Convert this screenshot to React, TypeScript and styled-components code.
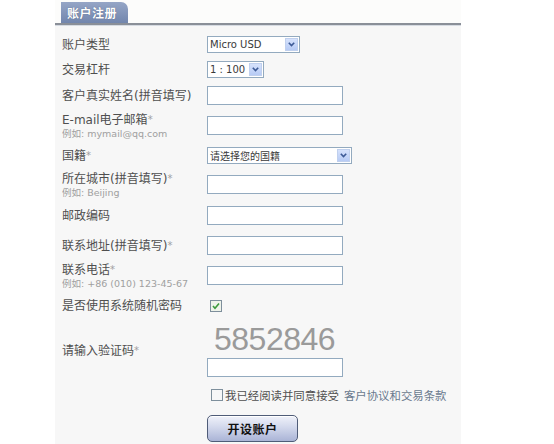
import React from "react";
import styled, { createGlobalStyle } from "styled-components";

const GlobalStyle = createGlobalStyle`
  html, body { margin: 0; padding: 0; background: #ffffff; }
  body {
    font-family: "DejaVu Sans", "Noto Sans CJK SC", sans-serif;
    color: #4a4a4a;
  }
`;

const Panel = styled.div`
  margin-left: 55px;
  width: 406px;
  height: 444px;
  background: #f7f7f7;
  overflow: hidden;
`;

const Header = styled.div`
  height: 25px;
  box-sizing: border-box;
  display: flex;
  align-items: flex-end;
  padding-left: 6px;
  background: #fcfcfb;
  border-bottom: 2px solid #8a8f98;
  box-shadow: 0 1px 0 #d6dbe2;
`;

const Tab = styled.div`
  height: 21px;
  width: 67px;
  box-sizing: border-box;
  display: flex;
  align-items: center;
  padding-left: 6px;
  background: linear-gradient(#95a5c6, #7286ad);
  border-top-right-radius: 7px;
  color: #ffffff;
  font-family: "Noto Sans CJK SC", sans-serif;
  font-weight: 700;
  font-size: 12px;
  letter-spacing: 0.5px;
  text-shadow: 0 0 1px #4a5a7a;
`;

const Form = styled.div`
  padding: 7px 0 0 7px;
  display: flex;
  flex-direction: column;
`;

const Row = styled.div<{ $h: number }>`
  display: grid;
  grid-template-columns: 145px auto;
  align-items: center;
  height: ${(p) => p.$h}px;
`;

const LabelBlock = styled.div`
  display: flex;
  flex-direction: column;
  gap: 1px;
`;

const Label = styled.span`
  font-size: 12px;
  line-height: 14px;
  color: #4f4f4f;
  white-space: nowrap;
`;

const Star = styled.span`
  color: #a0a0a0;
  font-size: 10px;
  vertical-align: top;
`;

const Hint = styled.span`
  font-size: 9.5px;
  line-height: 11px;
  color: #a0a0a0;
  white-space: nowrap;
`;

const TextInput = styled.div<{ $w?: number }>`
  width: ${(p) => p.$w ?? 136}px;
  height: 19px;
  box-sizing: border-box;
  border: 1px solid #93aabf;
  background: #ffffff;
`;

const SelectBox = styled.div<{ $w: number }>`
  width: ${(p) => p.$w}px;
  height: 17px;
  box-sizing: border-box;
  border: 1px solid #93aabf;
  background: #ffffff;
  display: flex;
  align-items: center;
  justify-content: space-between;
  padding-left: 2px;
`;

const SelectText = styled.span`
  font-size: 10px;
  color: #3a3a3a;
  white-space: nowrap;
`;

const ArrowBtn = styled.span`
  width: 13px;
  height: 13px;
  margin-right: 1px;
  box-sizing: border-box;
  background: linear-gradient(#d6e2fc, #b7cbf5);
  border: 1px solid #c0d0ee;
  display: flex;
  align-items: center;
  justify-content: center;
`;

const Check = styled.span`
  display: inline-flex;
  margin-left: 3px;
`;

const CaptchaCell = styled.div`
  display: flex;
  flex-direction: column;
  gap: 5px;
`;

const Captcha = styled.div`
  font-family: "Liberation Sans", sans-serif;
  font-size: 32px;
  line-height: 28px;
  height: 28px;
  letter-spacing: -0.5px;
  color: #9a9a9a;
  padding-left: 7px;
`;

const Agree = styled.div`
  display: flex;
  align-items: center;
  gap: 2px;
  margin-left: 4px;
  font-size: 11.4px;
  color: #4f4f4f;
  white-space: nowrap;
`;

const AgreeLink = styled.span`
  color: #6a7a8e;
  margin-left: 3px;
`;

const Button = styled.div`
  width: 91px;
  height: 27px;
  box-sizing: border-box;
  border: 1px solid #4f5c78;
  border-radius: 5px;
  background: linear-gradient(#f0f2fa 0%, #d2d8ec 45%, #aab4d6 100%);
  display: flex;
  align-items: center;
  justify-content: center;
  font-family: "Noto Sans CJK SC", sans-serif;
  font-weight: 700;
  font-size: 12px;
  color: #111;
  letter-spacing: 0.5px;
  box-shadow: inset 0 1px 0 #ffffff;
`;

const Arrow = () => (
  <ArrowBtn>
    <svg width="7" height="5" viewBox="0 0 7 5">
      <path d="M0.8 0.8 L3.5 3.6 L6.2 0.8" stroke="#3d5a96" strokeWidth="1.6" fill="none" />
    </svg>
  </ArrowBtn>
);

const Select = ({ w, text }: { w: number; text: string }) => (
  <SelectBox $w={w}>
    <SelectText>{text}</SelectText>
    <Arrow />
  </SelectBox>
);

const CheckBox = ({ checked }: { checked?: boolean }) => (
  <svg width="12" height="12" viewBox="0 0 12 12">
    <rect x="0.5" y="0.5" width="11" height="11" fill={checked ? "#eef3ea" : "#f6f7f8"} stroke="#7e8f9c" />
    {checked && <path d="M3 6 L5 8.2 L9 3.6" stroke="#3c9a3c" strokeWidth="1.6" fill="none" />}
  </svg>
);

export default function App() {
  return (
    <>
      <GlobalStyle />
      <Panel>
        <Header>
          <Tab>账户注册</Tab>
        </Header>
        <Form>
          <Row $h={25}>
            <Label>账户类型</Label>
            <Select w={93} text="Micro USD" />
          </Row>
          <Row $h={25}>
            <Label>交易杠杆</Label>
            <Select w={57} text="1 : 100" />
          </Row>
          <Row $h={27}>
            <Label>客户真实姓名(拼音填写)</Label>
            <TextInput />
          </Row>
          <Row $h={33}>
            <LabelBlock>
              <Label>E-mail电子邮箱<Star>*</Star></Label>
              <Hint>例如: mymail@qq.com</Hint>
            </LabelBlock>
            <TextInput />
          </Row>
          <Row $h={27}>
            <Label>国籍<Star>*</Star></Label>
            <Select w={145} text="请选择您的国籍" />
          </Row>
          <Row $h={31}>
            <LabelBlock>
              <Label>所在城市(拼音填写)<Star>*</Star></Label>
              <Hint>例如: Beijing</Hint>
            </LabelBlock>
            <TextInput />
          </Row>
          <Row $h={31}>
            <Label>邮政编码</Label>
            <TextInput />
          </Row>
          <Row $h={29}>
            <Label>联系地址(拼音填写)<Star>*</Star></Label>
            <TextInput />
          </Row>
          <Row $h={31}>
            <LabelBlock>
              <Label>联系电话<Star>*</Star></Label>
              <Hint>例如: +86 (010) 123-45-67</Hint>
            </LabelBlock>
            <TextInput />
          </Row>
          <Row $h={29}>
            <Label>是否使用系统随机密码</Label>
            <Check>
              <CheckBox checked />
            </Check>
          </Row>
          <Row $h={61}>
            <Label>请输入验证码<Star>*</Star></Label>
            <CaptchaCell>
              <Captcha>5852846</Captcha>
              <TextInput />
            </CaptchaCell>
          </Row>
          <Row $h={27}>
            <span />
            <Agree>
              <CheckBox />
              <span>我已经阅读并同意接受</span>
              <AgreeLink>客户协议和交易条款</AgreeLink>
            </Agree>
          </Row>
          <Row $h={41}>
            <span />
            <Button>开设账户</Button>
          </Row>
        </Form>
      </Panel>
    </>
  );
}
